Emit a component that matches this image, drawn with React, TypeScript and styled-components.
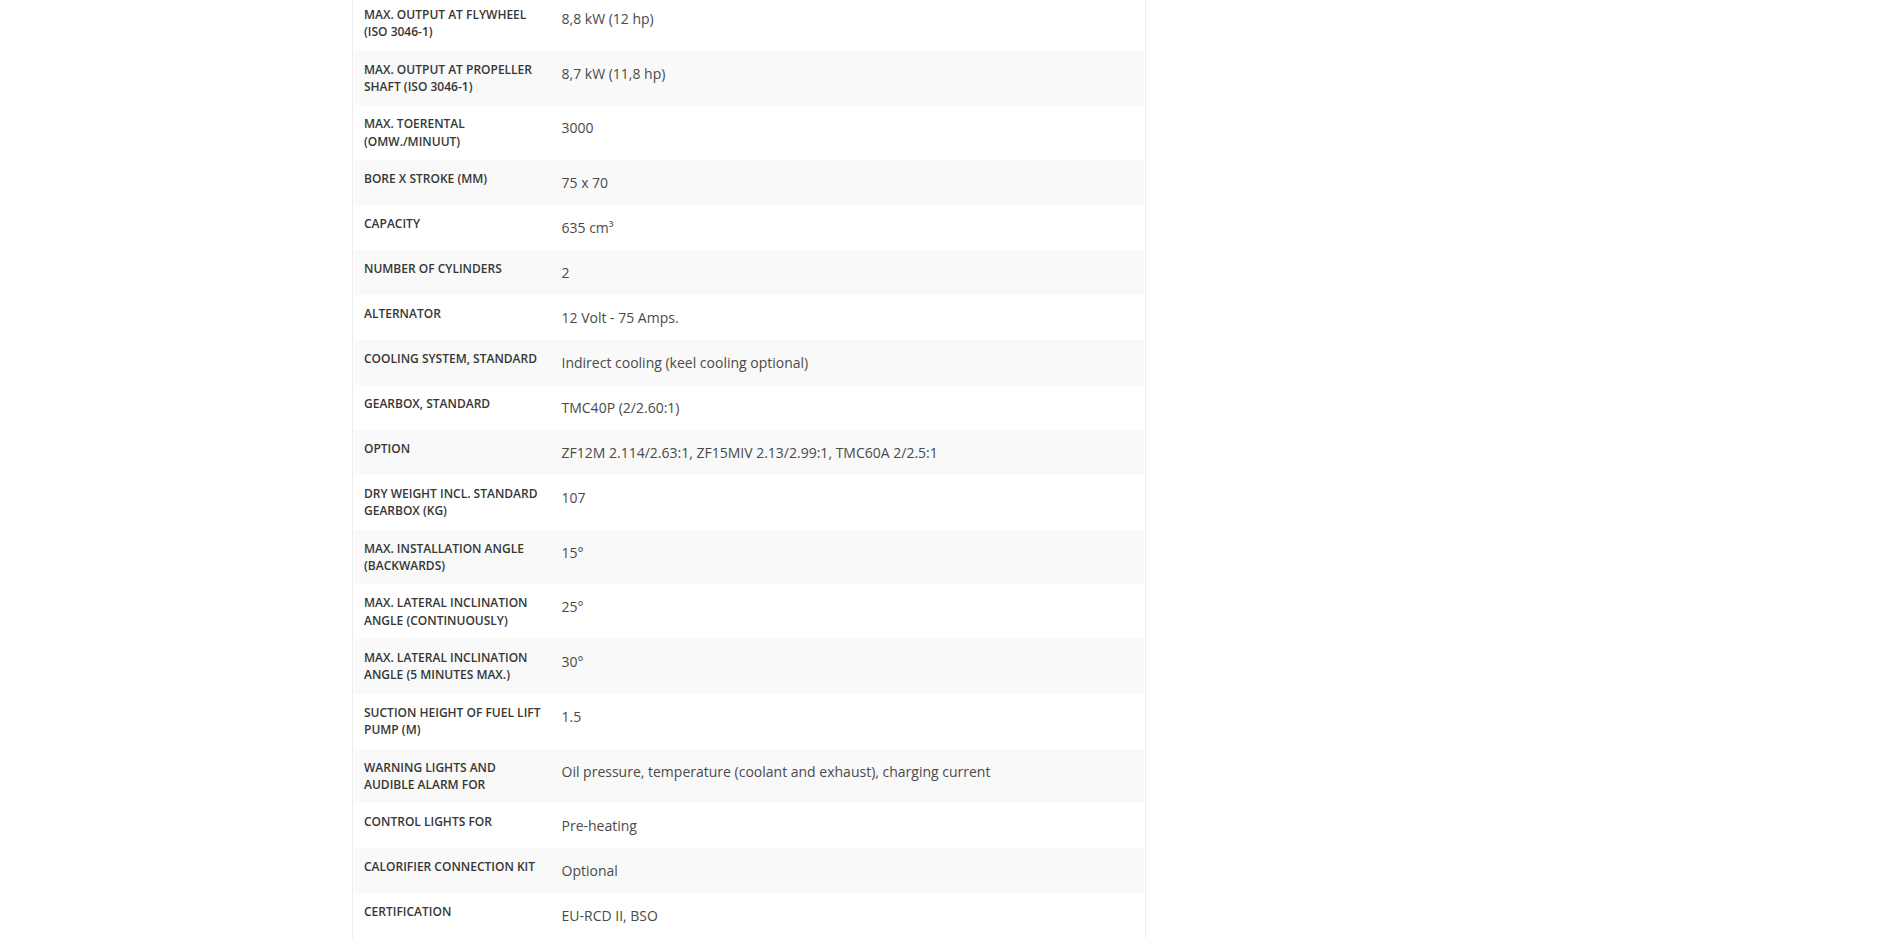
import React from "react";
import styled, { createGlobalStyle } from "styled-components";

const GlobalStyle = createGlobalStyle`
  html, body {
    margin: 0;
    padding: 0;
    background: #ffffff;
    overflow: hidden;
  }
  body {
    font-family: "Open Sans", "Liberation Sans", Arial, sans-serif;
    -webkit-font-smoothing: antialiased;
  }
`;

const Page = styled.div`
  display: flex;
  justify-content: flex-start;
  padding-left: 352px;
  height: 938px;
  overflow: hidden;
`;

const Panel = styled.section`
  width: 794px;
  box-sizing: border-box;
  border-left: 1px solid #ececec;
  border-right: 1px solid #ececec;
  padding: 0 1px;
  margin-top: -4px;
  align-self: flex-start;
`;

const SpecList = styled.dl`
  margin: 0;
  display: flex;
  flex-direction: column;
`;

const Row = styled.div<{ $striped: boolean }>`
  display: grid;
  grid-template-columns: 25% 75%;
  background: ${(p) => (p.$striped ? "#f9f9f9" : "#ffffff")};
`;

const Label = styled.dt`
  margin: 0;
  padding: 10px 10px 10px 10px;
  font-size: 12px;
  line-height: 17.35px;
  font-weight: 600;
  text-transform: uppercase;
  color: #363636;
`;

const Value = styled.dd`
  margin: 0;
  padding: 10px 10px 10px 10px;
  font-size: 14px;
  line-height: 25px;
  font-weight: 400;
  color: #4a4a4a;
`;

const specs: [string, string][] = [
  ["Max. output at flywheel (ISO 3046-1)", "8,8 kW (12 hp)"],
  ["Max. output at propeller shaft (ISO 3046-1)", "8,7 kW (11,8 hp)"],
  ["Max. toerental (omw./minuut)", "3000"],
  ["Bore x stroke (mm)", "75 x 70"],
  ["Capacity", "635 cm³"],
  ["Number of cylinders", "2"],
  ["Alternator", "12 Volt - 75 Amps."],
  ["Cooling system, standard", "Indirect cooling (keel cooling optional)"],
  ["Gearbox, standard", "TMC40P (2/2.60:1)"],
  ["Option", "ZF12M 2.114/2.63:1, ZF15MIV 2.13/2.99:1, TMC60A 2/2.5:1"],
  ["Dry weight incl. standard gearbox (kg)", "107"],
  ["Max. installation angle (backwards)", "15°"],
  ["Max. lateral inclination angle (continuously)", "25°"],
  ["Max. lateral inclination angle (5 minutes max.)", "30°"],
  ["Suction height of fuel lift pump (m)", "1.5"],
  ["Warning lights and audible alarm for", "Oil pressure, temperature (coolant and exhaust), charging current"],
  ["Control lights for", "Pre-heating"],
  ["Calorifier connection kit", "Optional"],
  ["Certification", "EU-RCD II, BSO"],
];

export default function App() {
  return (
    <>
      <GlobalStyle />
      <Page>
        <Panel>
          <SpecList>
            {specs.map(([label, value], i) => (
              <Row key={label} $striped={i % 2 === 1}>
                <Label>{label}</Label>
                <Value>{value}</Value>
              </Row>
            ))}
          </SpecList>
        </Panel>
      </Page>
    </>
  );
}
